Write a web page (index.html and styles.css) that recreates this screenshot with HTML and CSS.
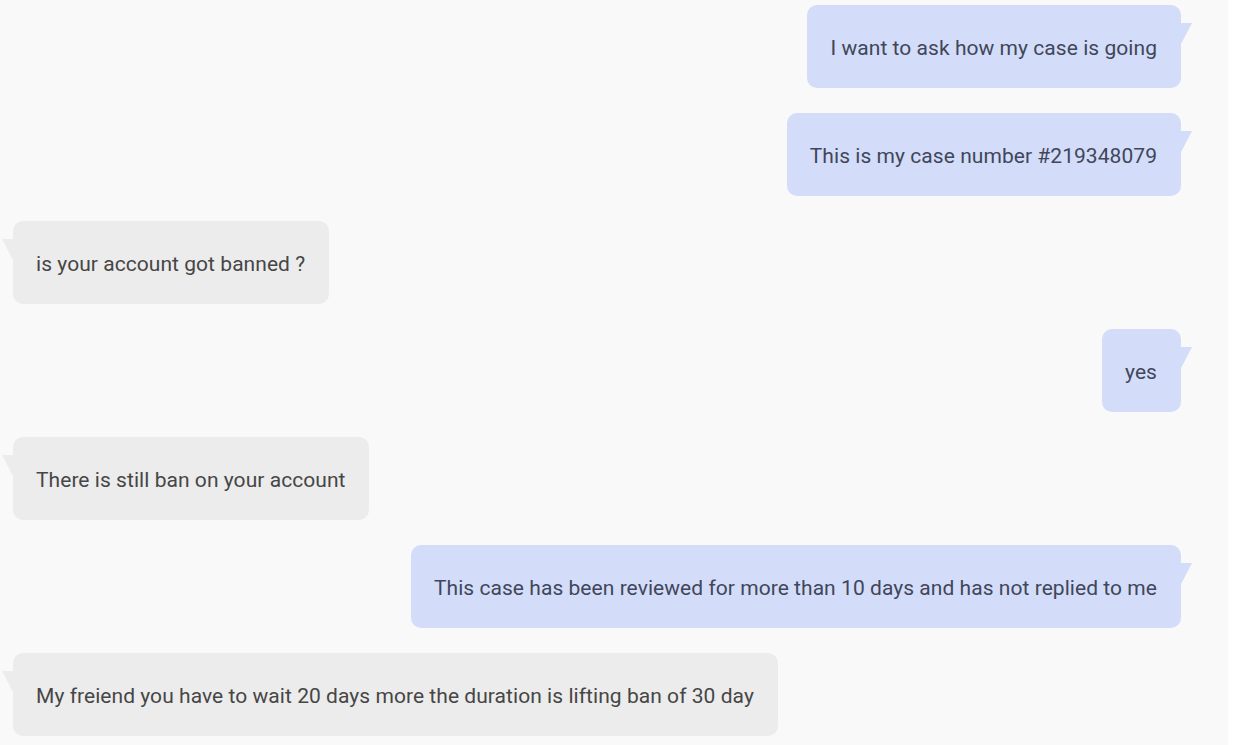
FILE: index.html
```html
<!DOCTYPE html>
<html lang="en">
<head>
    <meta charset="UTF-8">
    <meta name="viewport" content="width=device-width, initial-scale=1.0">
    <title>Support Chat</title>
    <link rel="stylesheet" href="styles.css">
</head>

<body>
    <div class="chat">
        <div class="row sent">
            <div class="bubble">I want to ask how my case is going</div>
        </div>
        <div class="row sent">
            <div class="bubble">This is my case number #219348079</div>
        </div>
        <div class="row received">
            <div class="bubble">is your account got banned ?</div>
        </div>
        <div class="row sent">
            <div class="bubble">yes</div>
        </div>
        <div class="row received">
            <div class="bubble">There is still ban on your account</div>
        </div>
        <div class="row sent">
            <div class="bubble">This case has been reviewed for more than 10 days and has not replied to me</div>
        </div>
        <div class="row received">
            <div class="bubble">My freiend you have to wait 20 days more the duration is lifting ban of 30 day</div>
        </div>
    </div>
</body>
</html>
```

FILE: styles.css
```css
body {
    margin: 0;
    background-color: #ffffff;
    font-family: Roboto, "Noto Sans", sans-serif;
}

.chat {
    width: 1228px;
    height: 745px;
    box-sizing: border-box;
    background-color: #f9f9f9;
    padding: 5px 47px 0 13px;
    display: flex;
    flex-direction: column;
    gap: 25px;
    overflow: hidden;
}

.row {
    display: flex;
}

.row.sent {
    justify-content: flex-end;
}

.row.received {
    justify-content: flex-start;
}

.bubble {
    position: relative;
    height: 83px;
    box-sizing: border-box;
    padding: 3px 24px 0 23px;
    display: flex;
    align-items: center;
    border-radius: 10px;
    font-size: 21px;
    letter-spacing: 0.05px;
    white-space: nowrap;
}

.sent .bubble {
    background-color: #d3ddf9;
    color: #41465a;
}

.received .bubble {
    background-color: #ececec;
    color: #464646;
}

.bubble::after {
    content: "";
    position: absolute;
    top: 18px;
    width: 11px;
    height: 21px;
}

.sent .bubble::after {
    right: -11px;
    background-color: #d3ddf9;
    clip-path: polygon(0 0, 100% 0, 0 100%);
}

.received .bubble::after {
    left: -11px;
    background-color: #ececec;
    clip-path: polygon(0 0, 100% 0, 100% 100%);
}
```
